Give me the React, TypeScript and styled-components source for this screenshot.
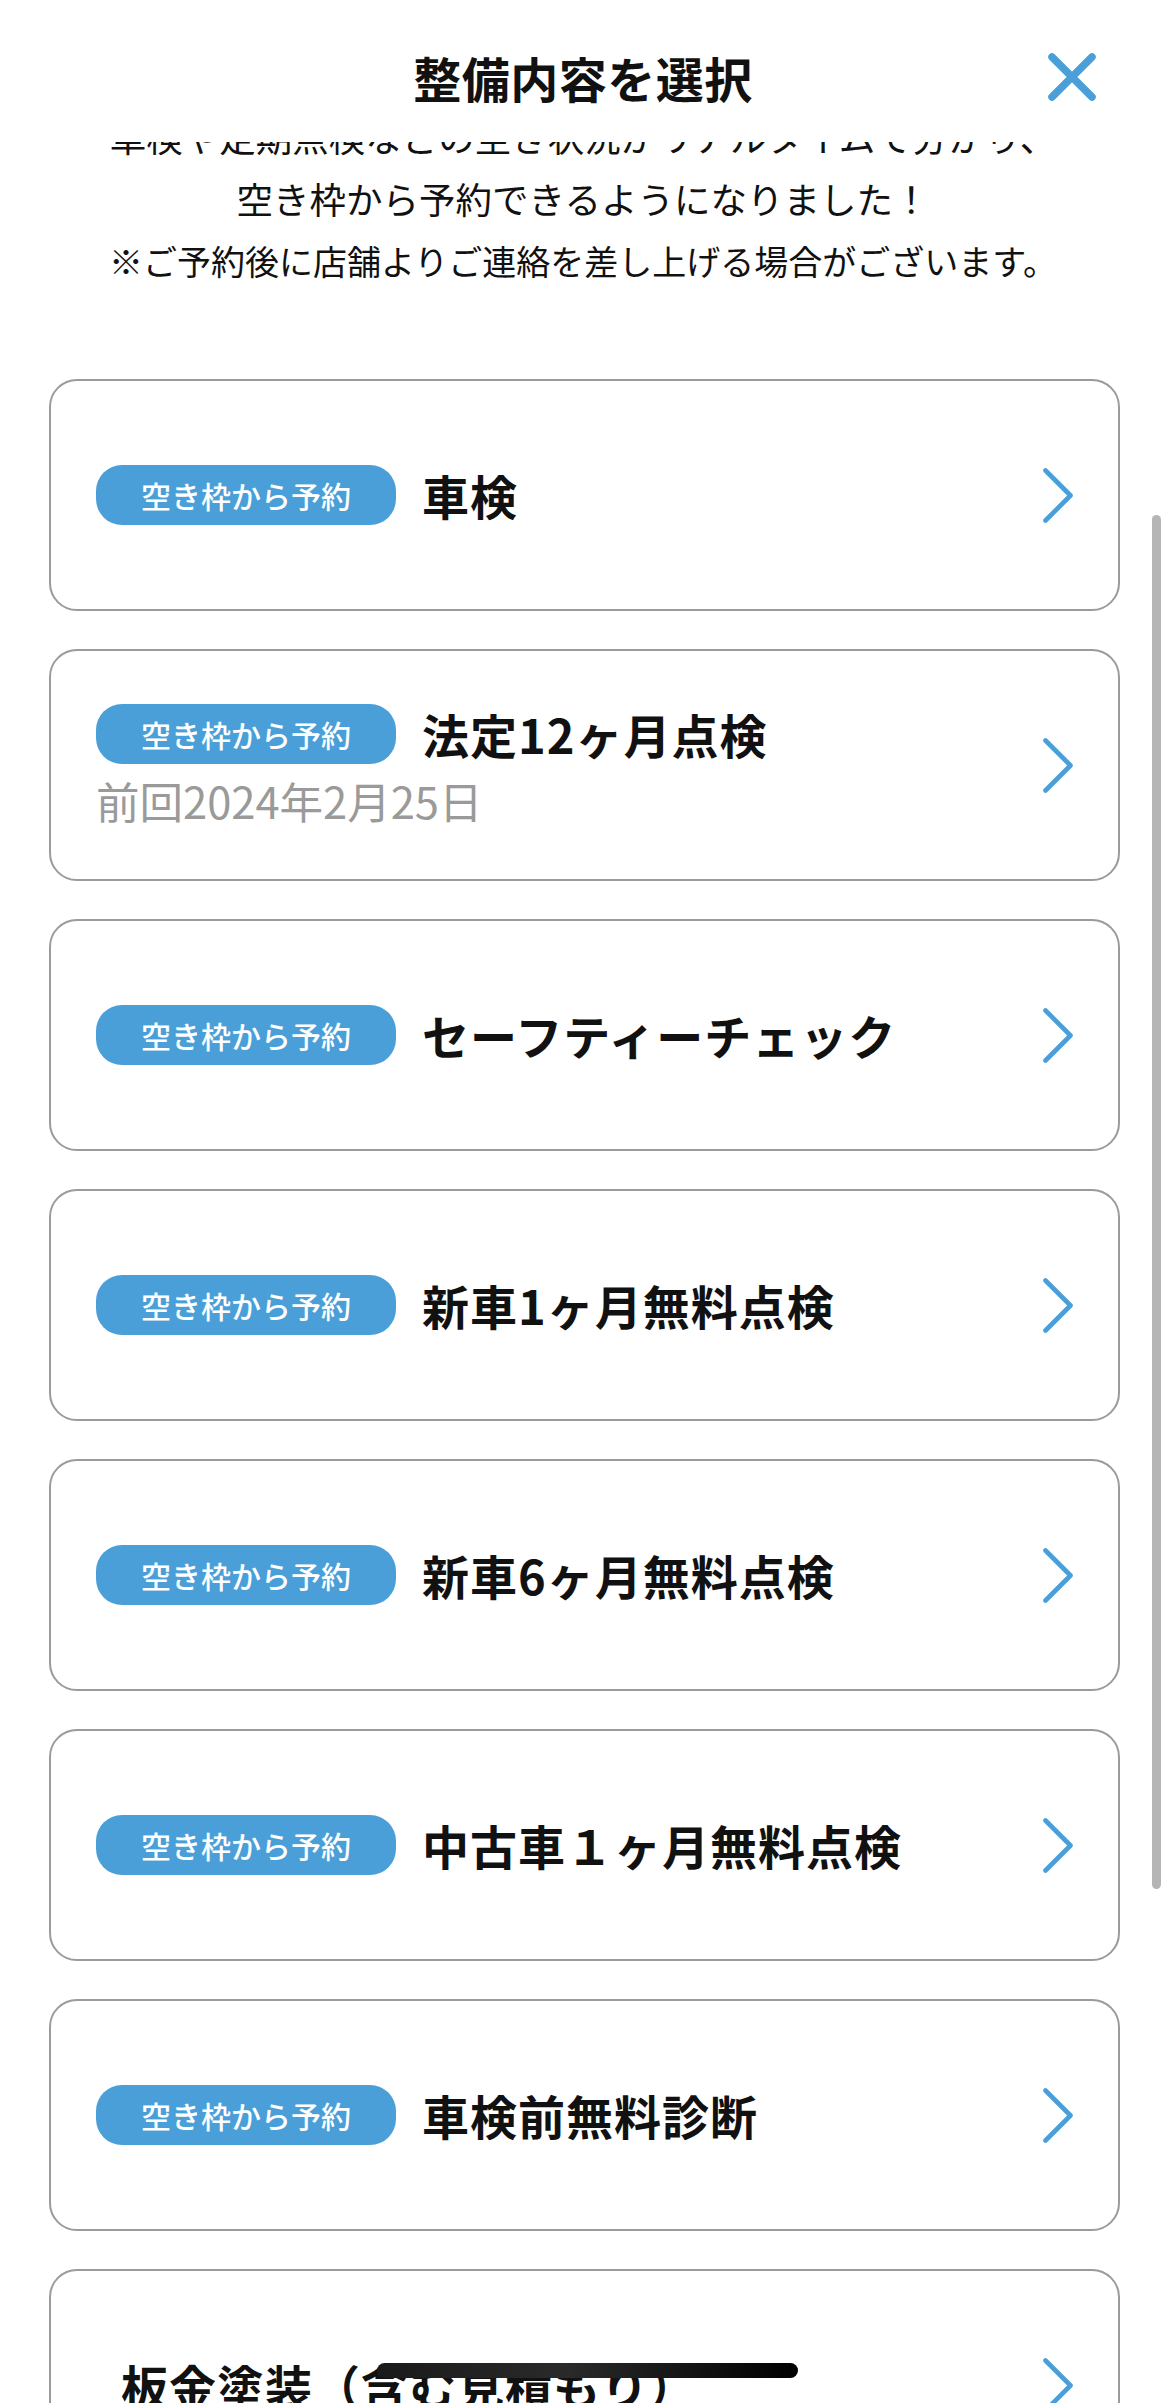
import React, { FunctionComponent, ReactElement } from 'react';
import styled, { createGlobalStyle } from 'styled-components';

const colors = {
    blue: '#4a9fd8',
    text: '#111111',
    gray: '#9a9a9a',
    border: '#9b9b9b',
    scroll: '#b5b5b5',
};

const GlobalStyle = createGlobalStyle`
    html, body {
        margin: 0;
        padding: 0;
        background: #ffffff;
    }
    body {
        font-family: 'Noto Sans CJK JP', 'Noto Sans', sans-serif;
        color: ${colors.text};
    }
    * {
        box-sizing: border-box;
    }
`;

const Screen = styled.div`
    position: relative;
    width: 1166px;
    height: 2403px;
    display: flex;
    flex-direction: column;
    overflow: hidden;
    background: #ffffff;
`;

const Header = styled.header`
    position: relative;
    z-index: 2;
    flex: none;
    height: 142px;
    display: flex;
    align-items: flex-start;
    justify-content: center;
    padding-top: 42px;
    background: #ffffff;
`;

const HeaderTitle = styled.h1`
    margin: 0;
    font-size: 48px;
    line-height: 70px;
    font-weight: 700;
    letter-spacing: 0.5px;
`;

const CloseButton = styled.button`
    position: absolute;
    top: 50px;
    right: 67px;
    width: 54px;
    height: 54px;
    padding: 0;
    border: none;
    background: none;
    display: flex;
    align-items: center;
    justify-content: center;
    cursor: pointer;
`;

const Viewport = styled.main`
    flex: 1;
    overflow: hidden;
`;

// scrolled content: the first intro line sits partly under the header
const ScrollContent = styled.div`
    margin-top: -36px;
    display: flex;
    flex-direction: column;
`;

const Intro = styled.div`
    display: flex;
    flex-direction: column;
    align-items: center;
    margin-bottom: 87px;
`;

interface IIntroLine {
    small?: boolean;
}

const IntroLine = styled.p<IIntroLine>`
    margin: 0;
    font-size: ${({ small }: IIntroLine): string => (small ? '34px' : '36.5px')};
    line-height: 62px;
    font-weight: 400;
    text-align: center;
    white-space: nowrap;
`;

const CardList = styled.ul`
    list-style: none;
    margin: 0;
    padding: 0 46px 0 49px;
    display: flex;
    flex-direction: column;
    gap: 38px;
`;

const Card = styled.li`
    flex: none;
    height: 232px;
    display: flex;
    align-items: center;
    padding: 0 45px;
    border: 2.5px solid ${colors.border};
    border-radius: 28px;
    background: #ffffff;
    cursor: pointer;
`;

const CardBody = styled.div`
    flex: 1;
    display: flex;
    flex-direction: column;
`;

interface ITitleRow {
    plain?: boolean;
}

const TitleRow = styled.div<ITitleRow>`
    display: flex;
    align-items: center;
    gap: 26px;
    padding-left: ${({ plain }: ITitleRow): string => (plain ? '25px' : '0')};
`;

const Badge = styled.span`
    flex: none;
    width: 300px;
    height: 60px;
    display: flex;
    align-items: center;
    justify-content: center;
    border-radius: 26px;
    background: ${colors.blue};
    color: #ffffff;
    font-size: 30px;
    font-weight: 500;
`;

const Title = styled.span`
    font-size: 47px;
    line-height: 60px;
    font-weight: 700;
    letter-spacing: 1px;
    white-space: nowrap;
`;

const LastDate = styled.span`
    margin-top: 12px;
    font-size: 43.5px;
    line-height: 50px;
    color: ${colors.gray};
`;

const Chevron = styled.svg`
    flex: none;
    width: 30px;
    height: 55px;
`;

const ScrollThumb = styled.div`
    position: absolute;
    top: 515px;
    right: 5px;
    width: 9px;
    height: 1374px;
    border-radius: 5px;
    background: ${colors.scroll};
`;

const HomeIndicator = styled.div`
    position: absolute;
    left: 377px;
    bottom: 25px;
    width: 421px;
    height: 15px;
    border-radius: 8px;
    background: linear-gradient(90deg, #1a1a1a 0%, #2a2a2a 45%, #000000 100%);
`;

interface IService {
    name: string;
    bookable: boolean;
    last?: string;
}

const services: IService[] = [
    { name: '車検', bookable: true },
    { name: '法定12ヶ月点検', bookable: true, last: '前回2024年2月25日' },
    { name: 'セーフティーチェック', bookable: true },
    { name: '新車1ヶ月無料点検', bookable: true },
    { name: '新車6ヶ月無料点検', bookable: true },
    { name: '中古車１ヶ月無料点検', bookable: true },
    { name: '車検前無料診断', bookable: true },
    { name: '板金塗装（含む見積もり）', bookable: false },
];

const ArrowIcon: FunctionComponent = (): ReactElement => (
    <Chevron viewBox="0 0 30 55" fill="none">
        <path
            d="M2.5 2.5 L27.5 27.5 L2.5 52.5"
            stroke={colors.blue}
            strokeWidth="4.6"
            strokeLinecap="round"
            strokeLinejoin="round"
        />
    </Chevron>
);

const CloseIcon: FunctionComponent = (): ReactElement => (
    <svg width="54" height="54" viewBox="0 0 54 54" fill="none">
        <path d="M7 7 L47 47 M47 7 L7 47" stroke={colors.blue} strokeWidth="7.5" strokeLinecap="round" />
    </svg>
);

const ServiceCard: FunctionComponent<{ service: IService }> = ({ service }): ReactElement => (
    <Card>
        <CardBody>
            <TitleRow plain={!service.bookable}>
                {service.bookable && <Badge>空き枠から予約</Badge>}
                <Title>{service.name}</Title>
            </TitleRow>
            {service.last && <LastDate>{service.last}</LastDate>}
        </CardBody>
        <ArrowIcon />
    </Card>
);

const App: FunctionComponent = (): ReactElement => (
    <>
        <GlobalStyle />
        <Screen>
            <Header>
                <HeaderTitle>整備内容を選択</HeaderTitle>
                <CloseButton aria-label="close">
                    <CloseIcon />
                </CloseButton>
            </Header>
            <Viewport>
                <ScrollContent>
                    <Intro>
                        <IntroLine>車検や定期点検などの空き状況がリアルタイムで分かり、</IntroLine>
                        <IntroLine>空き枠から予約できるようになりました！</IntroLine>
                        <IntroLine small>※ご予約後に店舗よりご連絡を差し上げる場合がございます。</IntroLine>
                    </Intro>
                    <CardList>
                        {services.map(
                            (service: IService): ReactElement => (
                                <ServiceCard key={service.name} service={service} />
                            )
                        )}
                    </CardList>
                </ScrollContent>
            </Viewport>
            <ScrollThumb />
            <HomeIndicator />
        </Screen>
    </>
);

export default App;
